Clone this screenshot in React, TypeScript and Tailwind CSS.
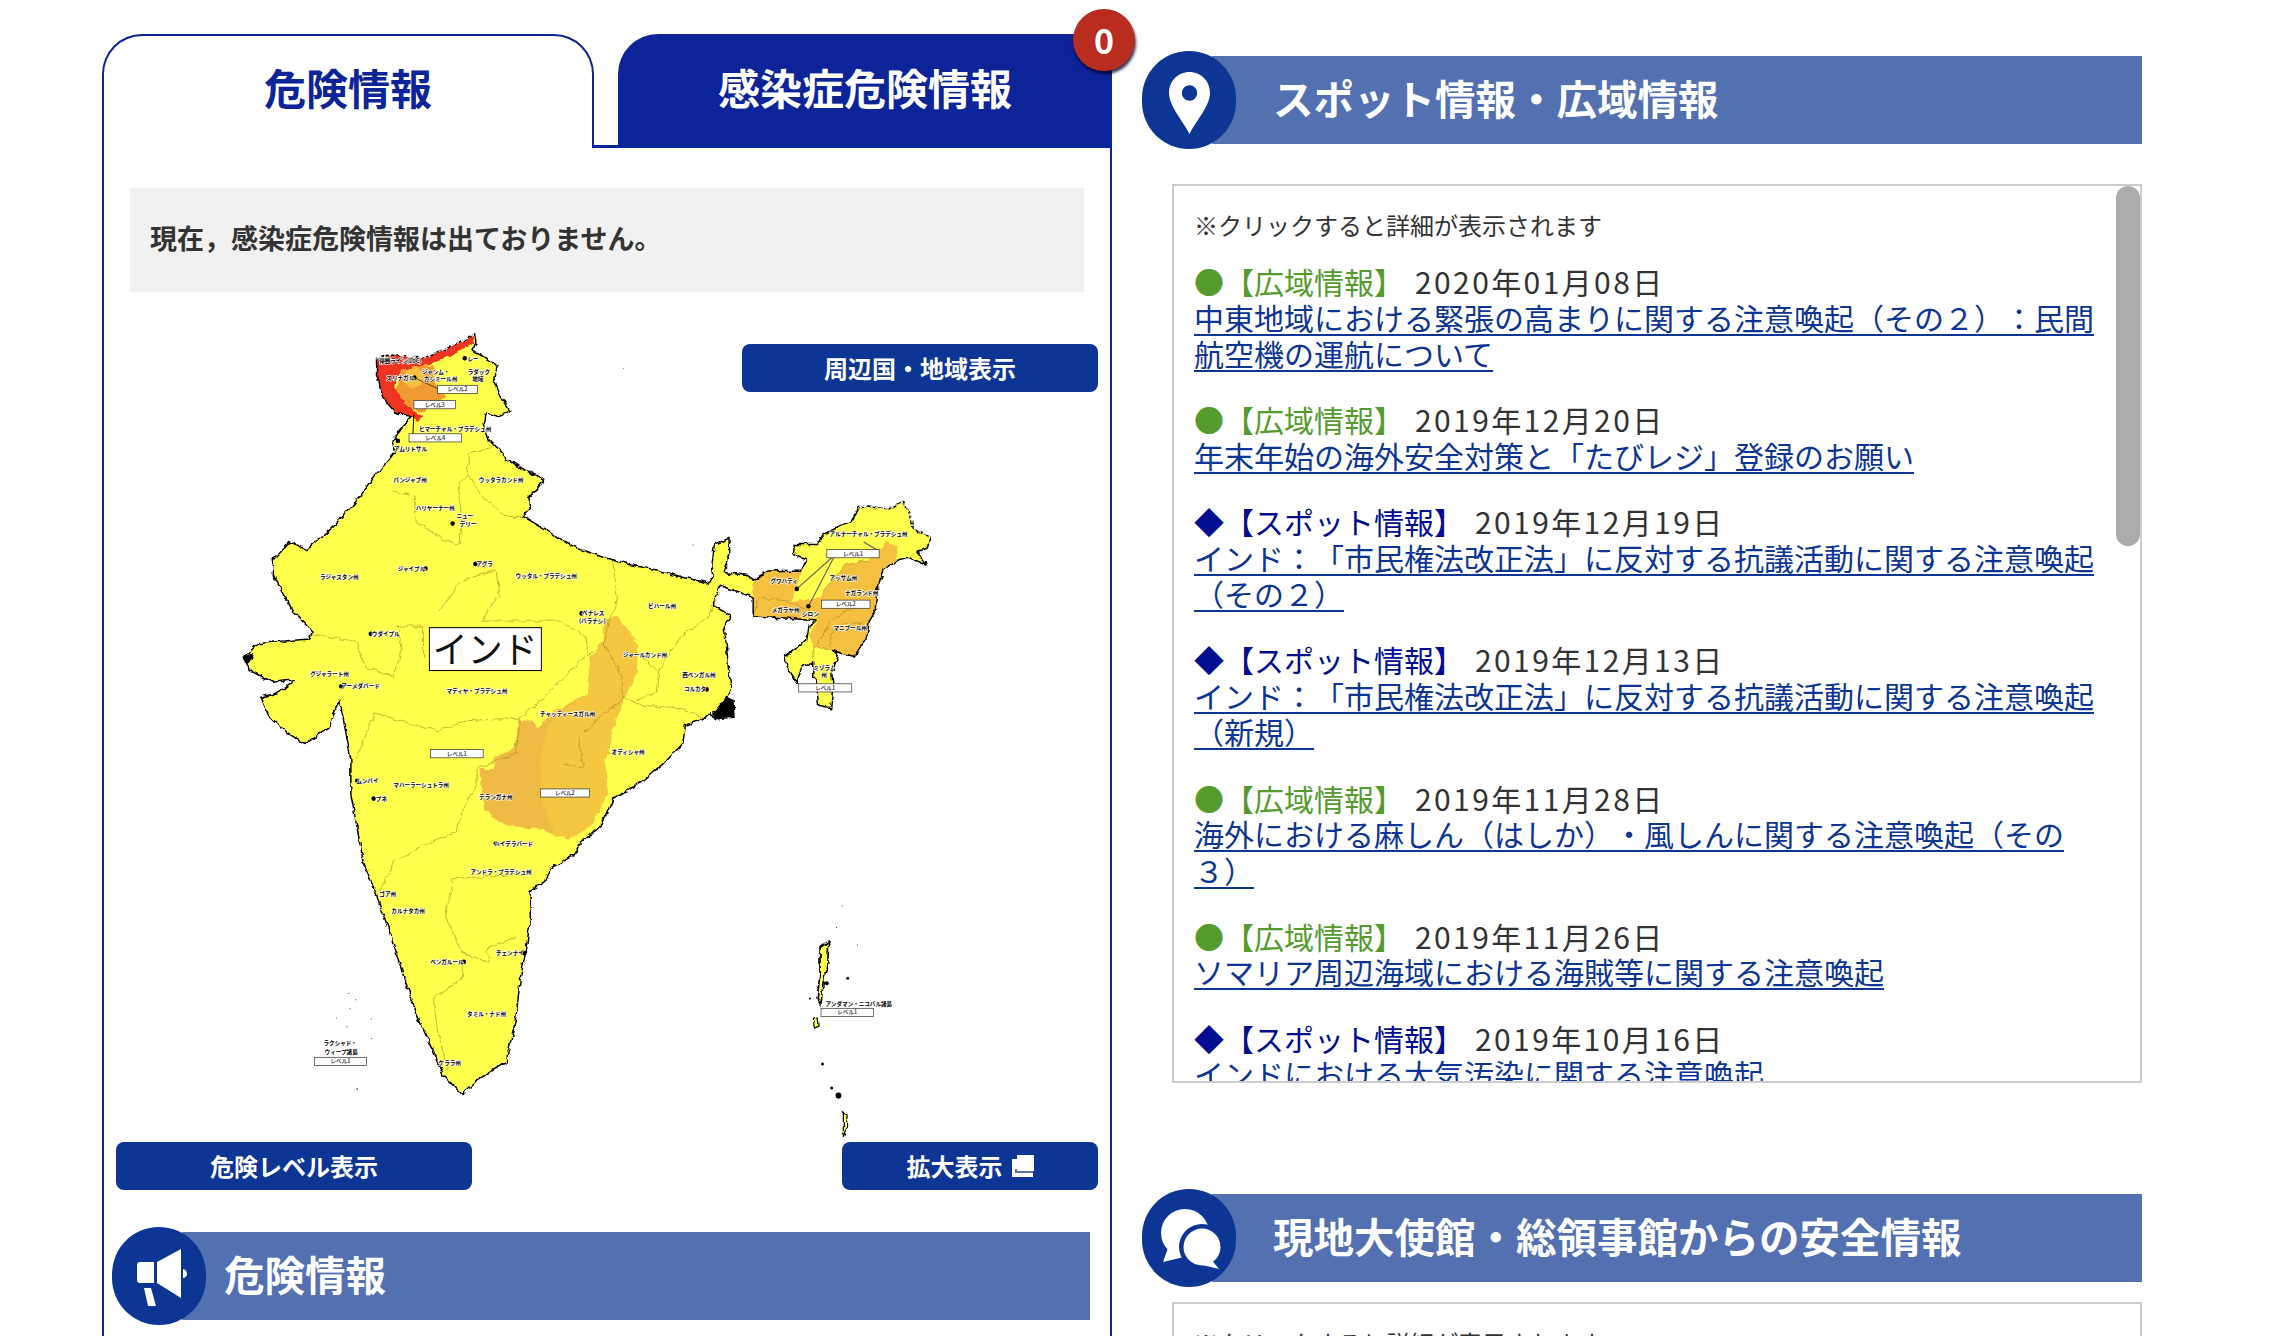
import { ReactNode } from "react";

const JP = "font-['Noto_Sans_CJK_JP','Noto_Sans',sans-serif]";

const outline =
  "M325,75 L350,68 L385,72 L420,75 L470,55 L505,40 L525,25 L528,45 L520,60 L540,70 L572,90 L565,115 L580,150 L598,178 L575,190 L550,182 L545,205 L555,235 L590,270 L620,290 L668,312 L655,330 L635,350 L640,370 L625,385 L670,410 L710,435 L745,450 L790,465 L850,480 L900,490 L960,505 L1005,515 L1020,505 L1015,480 L1020,440 L1050,428 L1052,460 L1040,495 L1085,500 L1100,510 L1130,492 L1200,490 L1210,470 L1183,460 L1185,440 L1235,440 L1245,420 L1300,395 L1320,365 L1380,370 L1410,355 L1425,385 L1430,410 L1465,425 L1458,450 L1440,455 L1458,480 L1420,465 L1400,470 L1370,490 L1355,530 L1352,570 L1340,590 L1335,620 L1310,660 L1265,648 L1275,660 L1262,690 L1265,715 L1260,760 L1235,755 L1230,705 L1225,700 L1225,670 L1200,680 L1190,710 L1170,680 L1165,660 L1210,630 L1215,600 L1230,590 L1180,585 L1100,580 L1100,545 L1090,540 L1060,530 L1030,520 L1020,540 L1018,560 L1055,580 L1040,600 L1045,640 L1050,690 L1055,720 L1045,740 L1060,770 L1020,785 L1010,770 L1000,780 L960,795 L955,830 L920,865 L870,905 L810,940 L790,985 L740,1030 L730,1050 L680,1075 L670,1100 L640,1120 L640,1180 L630,1240 L620,1290 L610,1370 L590,1455 L530,1490 L500,1518 L460,1480 L440,1430 L410,1370 L380,1290 L350,1200 L320,1120 L295,1060 L280,980 L270,930 L270,860 L250,760 L245,745 L225,800 L175,830 L140,810 L100,775 L85,740 L120,730 L155,705 L110,710 L60,685 L50,660 L75,635 L120,630 L185,625 L190,610 L150,570 L110,500 L110,470 L145,435 L180,450 L240,400 L290,345 L320,305 L360,260 L355,235 L375,210 L395,190 L360,180 L335,150 L325,110 Z";

const borders = [
  "M355,335 L400,345 L405,395 L460,430 L495,440 L500,390 L490,330 L510,300 L515,260 L560,250",
  "M510,300 L540,345 L590,385 L625,385",
  "M450,570 L500,510 L570,490 L575,540 L540,590 L640,590 L700,590 L755,620 L760,660 L790,630 L820,545 L810,470",
  "M190,615 L280,630 L300,680 L360,700 L375,640 L365,600 L420,600 L420,660",
  "M320,770 L350,780 L450,805 L510,785 L620,780 L670,740 L720,690 L750,660",
  "M280,860 L320,770",
  "M620,780 L610,850 L530,880 L530,910 L500,960 L490,1000 L420,1030 L360,1060 L330,1120",
  "M790,630 L830,700 L830,740 L870,755 L950,760 L1000,780",
  "M710,870 L750,880 L740,820 L780,780 L835,740",
  "M905,690 L950,620 L1010,580 L1030,530",
  "M860,650 L905,690 L900,730 L860,745",
  "M480,1095 L640,1085 M480,1095 L465,1170 L500,1240 L555,1260 L550,1230 L610,1210",
  "M440,1330 L500,1290 L500,1260",
  "M470,1470 L450,1400 L440,1330",
  "M1110,545 L1170,550 L1220,570 M1100,580 L1110,545",
  "M1230,640 L1260,590 L1290,570 L1335,560 M1255,640 L1270,600 L1340,590",
  "M1245,530 L1290,480 L1340,470 M1225,640 L1225,670 M1265,648 L1225,640",
];

const labels: [number, number, string][] = [
  [372, 80, "停戦ライン(LoC)"],
  [372, 114, "スリナガル"],
  [445, 101, "ジャンム・"],
  [455, 116, "カシミール州"],
  [534, 101, "ラダック"],
  [532, 116, "地域"],
  [522, 76, "レー"],
  [485, 213, "ヒマーチャル・プラデシュ州"],
  [393, 253, "アムリトサル"],
  [392, 314, "パンジャブ州"],
  [580, 314, "ウッタラカンド州"],
  [444, 368, "ハリヤーナー州"],
  [505, 384, "ニュー"],
  [512, 399, "デリー"],
  [395, 487, "ジャイプル"],
  [246, 504, "ラジャスタン州"],
  [546, 478, "アグラ"],
  [673, 502, "ウッタル・プラデシュ州"],
  [912, 560, "ビハール州"],
  [770, 575, "ベナレス"],
  [768, 590, "(バラナシ)"],
  [342, 615, "ウダイプル"],
  [877, 657, "ジャールカンド州"],
  [988, 696, "西ベンガル州"],
  [226, 694, "グジャラート州"],
  [290, 718, "アーメダバード"],
  [530, 727, "マディヤ・プラデシュ州"],
  [980, 724, "コルカタ"],
  [717, 772, "チャッティースガル州"],
  [842, 846, "オディシャ州"],
  [304, 903, "ムンバイ"],
  [415, 912, "マハーラーシュトラ州"],
  [333, 938, "プネ"],
  [569, 934, "テランガナ州"],
  [606, 1026, "ハイデラバード"],
  [580, 1082, "アンドラ・プラデシュ州"],
  [346, 1124, "ゴア州"],
  [388, 1158, "カルナタカ州"],
  [598, 1241, "チェンナイ"],
  [468, 1258, "ベンガルール"],
  [550, 1360, "タミル・ナド州"],
  [474, 1456, "ケララ州"],
  [248, 1416, "ラクシャド・"],
  [250, 1435, "ウィープ諸島"],
  [1318, 1340, "アンダマン・ニコバル諸島"],
  [1338, 420, "アルナーチャル・プラデシュ州"],
  [1164, 511, "グワハティ"],
  [1286, 505, "アッサム州"],
  [1324, 534, "ナガランド州"],
  [1167, 569, "メガラヤ州"],
  [1218, 576, "シロン"],
  [1300, 603, "マニプール州"],
  [1247, 681, "ミゾラム"],
  [1246, 696, "州"],
];

const levels: [number, number, number, string][] = [
  [449, 128, 82, "レベル2"],
  [400, 158, 86, "レベル3"],
  [390, 223, 108, "レベル4"],
  [434, 842, 109, "レベル1"],
  [661, 919, 101, "レベル2"],
  [1252, 450, 108, "レベル1"],
  [1241, 549, 100, "レベル2"],
  [1194, 713, 109, "レベル1"],
  [1240, 1349, 108, "レベル1"],
  [195, 1445, 107, "レベル1"],
];

const cities: [number, number][] = [
  [505, 75], [401, 113], [367, 237], [480, 399], [424, 487], [527, 478], [746, 575],
  [311, 615], [250, 718], [1004, 724], [283, 903], [317, 938], [569, 1026],
  [628, 1241], [503, 1258], [1190, 527], [1214, 561],
];

const IndiaMap = () => (
  <svg
    viewBox="0 0 1568 1611"
    width={760}
    height={822}
    preserveAspectRatio="none"
    className="block"
  >
    <defs>
      <filter id="rough" x="0" y="0" width="1568" height="1611" filterUnits="userSpaceOnUse">
        <feTurbulence type="fractalNoise" baseFrequency="0.07" numOctaves={2} seed={4} />
        <feDisplacementMap in="SourceGraphic" scale={11} xChannelSelector="R" yChannelSelector="G" />
      </filter>
    </defs>
    <g filter="url(#rough)">
      <path d={outline} fill="#ffff4d" />
      <path
        d="M790,590 L815,580 L845,610 L862,640 L860,690 L835,740 L810,800 L795,870 L800,930 L770,985 L720,1018 L670,1000 L590,990 L545,960 L535,880 L565,880 L570,855 L610,840 L615,785 L645,785 L655,800 L685,770 L760,730 L765,660 L790,630 Z"
        fill="#f0bb45"
      />
      <path
        d="M790,590 L815,580 L845,610 L862,640 L860,690 L835,740 L810,800 L795,870 L800,930 L770,985 L720,1018 L690,1005 L660,930 L660,860 L680,790 L760,730 L765,660 L790,630 Z"
        fill="#f5c63f"
      />
      <path
        d="M1100,510 L1130,492 L1200,490 L1190,520 L1180,550 L1240,545 L1245,530 L1290,480 L1340,470 L1375,435 L1400,445 L1395,470 L1370,490 L1355,530 L1352,570 L1340,590 L1335,620 L1310,660 L1265,648 L1225,640 L1215,620 L1235,585 L1180,585 L1100,580 Z"
        fill="#f5c040"
      />
      <path
        d="M325,75 L350,68 L385,72 L420,75 L470,55 L505,40 L525,25 L522,45 L470,72 L420,90 L375,98 L360,130 L390,172 L420,190 L405,200 L395,190 L360,180 L335,150 L325,110 Z"
        fill="#ee3524"
      />
      <path d="M375,98 L420,90 L440,88 L445,130 L465,150 L420,182 L390,172 L365,135 Z" fill="#f29a33" />
      <circle cx={400} cy={113} r={20} fill="#f5c040" />
      {borders.map((d, i) => (
        <path key={i} d={d} fill="none" stroke="#9a8420" strokeWidth={1.2} />
      ))}
      <path d={outline} fill="none" stroke="#000" strokeWidth={3} strokeLinejoin="round" />
      <path d="M325,75 L350,68 L385,72 L420,75 L470,55 L505,40 L525,25" fill="none" stroke="#fff" strokeWidth={2.4} strokeDasharray="6 6" />
      <path d="M1320,365 L1380,370 L1410,355 L1425,385 L1430,410 L1465,425" fill="none" stroke="#fff" strokeWidth={2.4} strokeDasharray="5 6" />
      {/* 海岸の黒い部分と島 */}
      <path d="M1015,772 L1045,738 L1060,745 L1062,780 L1020,783 Z" fill="#000" />
      <path d="M46,662 L65,652 L72,662 L55,675 Z" fill="#000" />
      <path d="M1238,1230 L1256,1218 L1254,1260 L1244,1300 L1240,1342 L1232,1330 L1238,1280 Z" fill="#ffff4d" stroke="#000" strokeWidth={3.5} />
      <path d="M1224,1368 L1234,1366 L1236,1384 L1226,1388 Z" fill="#ffff4d" stroke="#000" strokeWidth={2.5} />
      <path d="M1286,1552 L1294,1556 L1292,1590 L1286,1600 Z" fill="#ffff4d" stroke="#000" strokeWidth={2.5} />
    </g>
    {[
      [1252, 1300, 4], [1295, 1290, 3], [1217, 1330, 2], [1243, 1458, 3], [1262, 1505, 3], [1276, 1520, 6],
      [1284, 1148, 1], [1272, 1190, 1], [1315, 1225, 1], [266, 1320, 1], [280, 1332, 1], [268, 1350, 1],
      [240, 1368, 1], [312, 1370, 1], [262, 1385, 1], [312, 1408, 1], [283, 1507, 1.5], [976, 441, 1], [832, 95, 0.8],
    ].map(([cx, cy, r], i) => (
      <circle key={i} cx={cx} cy={cy} r={r} fill="#000" />
    ))}
    <path d="M400,185 L398,225" stroke="#000" strokeWidth={2} />
    <path d="M401,113 L450,135" stroke="#000" strokeWidth={1.2} />
    <path d="M1190,527 L1262,466 M1214,561 L1266,466 M1328,435 L1358,452" stroke="#666" strokeWidth={2.4} />
    {cities.map(([cx, cy], i) => (
      <circle key={i} cx={cx} cy={cy} r={4.6} fill="#000" />
    ))}
    {labels.map(([x, y, t], i) => (
      <text
        key={i}
        x={x}
        y={y + 4}
        textAnchor="middle"
        fontSize={11.5}
        fontWeight={700}
        fontFamily="'Noto Sans CJK JP', sans-serif"
        fill="#000"
        stroke="#fff"
        strokeWidth={2.5}
        paintOrder="stroke"
      >
        {t}
      </text>
    ))}
    {levels.map(([x, y, w, t], i) => (
      <g key={i}>
        <rect x={x} y={y} width={w} height={16} fill="#fff" stroke="#333" strokeWidth={1.4} />
        <text
          x={x + w / 2}
          y={y + 12}
          textAnchor="middle"
          fontSize={11.5}
          fontWeight={500}
          fontFamily="'Noto Sans CJK JP', sans-serif"
          fill="#222"
        >
          {t}
        </text>
      </g>
    ))}
    <rect x={432} y={603} width={231} height={84} fill="#fff" stroke="#000" strokeWidth={2} />
    <text
      x={547}
      y={673}
      textAnchor="middle"
      fontSize={72}
      fontFamily="'Noto Sans CJK JP', sans-serif"
      fill="#111"
    >
      インド
    </text>
  </svg>
);

const PinIcon = () => (
  <svg viewBox="0 0 41 62" className="mt-[5px] h-[62px] w-[41px]">
    <path
      fillRule="evenodd"
      d="M20.500 0C9 0 0 9 0 21c0 13 14 28 20.500 41C27 49 41 34 41 21 41 9 32 0 20.500 0Zm0 13.300a7.700 7.700 0 1 1 0 15.400 7.700 7.700 0 0 1 0-15.400Z"
      fill="#fff"
    />
  </svg>
);

const MegaphoneIcon = () => (
  <svg viewBox="7 7 94 98" className="h-[98px] w-[94px]">
    <path d="M35 42 H49 V63 H35 Q32 63 32 60 V45 Q32 42 35 42 Z" fill="#fff" />
    <path d="M52 42 L76 29 L76 78 L52 63 Z" fill="#fff" />
    <path d="M78 49 Q82 50 82 54 Q82 57 78 58 Z" fill="#fff" />
    <path d="M39 68 L46 68 L51 86 L43 86 Z" fill="#fff" />
  </svg>
);

const BubblesIcon = () => (
  <svg viewBox="12 9 94 98" className="h-[98px] w-[94px]">
    <circle cx={55} cy={53} r={24} fill="#fff" />
    <path d="M38 68 L33 82 L54 77 Z" fill="#fff" />
    <circle cx={72} cy={67} r={23} fill="#0d3593" />
    <circle cx={72} cy={67} r={18.500} fill="#fff" />
    <path d="M80 78 L89 89 L68 84 Z" fill="#fff" />
  </svg>
);

const CopyIcon = () => (
  <svg viewBox="0 0 22 22" className="h-[22px] w-[22px]">
    <path d="M0 4 H5 V16 H21 V22 H0 Z" fill="#fff" />
    <rect x={3} y={14} width={18} height={4} fill="#5b72b5" />
    <rect x={5} y={0} width={17} height={16} fill="#fff" />
  </svg>
);

interface SectionBannerProps {
  title: string;
  icon: ReactNode;
  className?: string;
  titleClassName?: string;
}

const SectionBanner = ({ title, icon, className, titleClassName }: SectionBannerProps) => (
  <div className={`flex items-center h-[98px] ${className ?? ""}`}>
    <div className="relative z-10 flex h-[98px] w-[94px] shrink-0 items-center justify-center rounded-full bg-[#0d3593]">
      {icon}
    </div>
    <div
      className={`-ml-[24px] flex h-[88px] flex-1 items-center bg-[#5370b0] pb-[3px] text-[40.5px] leading-none font-bold text-white ${titleClassName ?? ""}`}
    >
      {title}
    </div>
  </div>
);

interface ActionButtonProps {
  children: ReactNode;
  className?: string;
}

const ActionButton = ({ children, className }: ActionButtonProps) => (
  <button
    className={`flex h-[48px] items-center justify-center rounded-lg bg-[#0d3593] text-[24px] leading-none font-bold text-white ${className ?? ""}`}
  >
    {children}
  </button>
);

interface Notice {
  kind: "wide" | "spot";
  date: string;
  text: string;
}

const notices: Notice[] = [
  { kind: "wide", date: "2020年01月08日", text: "中東地域における緊張の高まりに関する注意喚起（その２）：民間航空機の運航について" },
  { kind: "wide", date: "2019年12月20日", text: "年末年始の海外安全対策と「たびレジ」登録のお願い" },
  { kind: "spot", date: "2019年12月19日", text: "インド：「市民権法改正法」に反対する抗議活動に関する注意喚起（その２）" },
  { kind: "spot", date: "2019年12月13日", text: "インド：「市民権法改正法」に反対する抗議活動に関する注意喚起（新規）" },
  { kind: "wide", date: "2019年11月28日", text: "海外における麻しん（はしか）・風しんに関する注意喚起（その３）" },
  { kind: "wide", date: "2019年11月26日", text: "ソマリア周辺海域における海賊等に関する注意喚起" },
  { kind: "spot", date: "2019年10月16日", text: "インドにおける大気汚染に関する注意喚起" },
];

const NoticeItem = ({ notice }: { notice: Notice }) => (
  <li className="mb-[29.75px] text-[30px] leading-[36.5px]">
    <div className="-mb-[1px]">
      {notice.kind === "wide" ? (
        <span className="text-[#559b2e]">●【広域情報】</span>
      ) : (
        <span className="text-[#000e8f]">◆【スポット情報】</span>
      )}
      <span className="ml-[11px] tracking-[2.4px] text-[#333]">{notice.date}</span>
    </div>
    <a className="text-[#0d3593] underline underline-offset-[4px] decoration-2">{notice.text}</a>
  </li>
);

const App = () => {
  return (
    <div className={`relative flex h-[1336px] w-[2284px] items-start overflow-hidden bg-white [text-spacing-trim:space-all] ${JP}`}>
      {/* 左カラム */}
      <div className="ml-[102px] mt-[34px] w-[1010px] shrink-0">
        <div className="flex h-[114px]">
          <div className="flex w-[492px] justify-center rounded-t-[40px] border-2 border-b-0 border-[#0d2398] pt-[26px] text-[42px] leading-[50px] font-bold text-[#0d2398]">
            危険情報
          </div>
          <div className="w-[24px] self-end border-b-[3px] border-[#0d2398]" />
          <div className="relative flex flex-1 justify-center rounded-tl-[40px] bg-[#0d2398] pt-[28px] text-[42px] leading-[50px] font-bold text-white">
            感染症危険情報
            <div className="absolute -top-[25px] -right-[23px] flex h-[62px] w-[62px] items-center justify-center rounded-full bg-[#b92c20] text-[34px] leading-none font-bold text-white shadow-[1px_3px_3px_rgba(0,0,40,0.8)]">
              0
            </div>
          </div>
        </div>
        <div className="h-[1190px] border-x-2 border-[#0d2398] pt-[40px]">
          <div className="ml-[26px] flex h-[104px] w-[954px] items-center bg-[#f1f1f1] pb-[4px] pl-[20px] text-[27px] font-bold text-[#333]">
            現在，感染症危険情報は出ておりません。
          </div>
          <div className="relative mt-[28px] pl-[116px]">
            <IndiaMap />
            <ActionButton className="absolute right-[12px] top-[24px] w-[356px]">周辺国・地域表示</ActionButton>
          </div>
          <div className="flex justify-between px-[12px]">
            <ActionButton className="w-[356px]">危険レベル表示</ActionButton>
            <ActionButton className="w-[256px] gap-[9px]">
              拡大表示
              <CopyIcon />
            </ActionButton>
          </div>
          <SectionBanner
            title="危険情報"
            icon={<MegaphoneIcon />}
            className="ml-[8px] mr-[20px] mt-[37px]"
            titleClassName="pl-[42px]"
          />
        </div>
      </div>

      {/* 右カラム */}
      <div className="ml-[30px] mt-[51px] w-[1000px] shrink-0">
        <SectionBanner title="スポット情報・広域情報" icon={<PinIcon />} titleClassName="pl-[61px]" />
        <div className="relative ml-[30px] mt-[35px] h-[899px] overflow-hidden border-2 border-[#ccc] pl-[20px] pr-[30px] pt-[21px]">
          <p className="mb-[20px] text-[24px] leading-[36px] text-[#333]">※クリックすると詳細が表示されます</p>
          <ul>
            {notices.map((n) => (
              <NoticeItem key={n.date} notice={n} />
            ))}
          </ul>
          <div className="absolute right-0 top-0 h-[360px] w-[24px] rounded-full bg-[#acacac]" />
        </div>
        <SectionBanner
          title="現地大使館・総領事館からの安全情報"
          icon={<BubblesIcon />}
          className="mt-[106px]"
          titleClassName="pl-[61px]"
        />
        <div className="ml-[30px] mt-[15px] h-[200px] border-2 border-[#ccc] pl-[20px] pt-[21px]">
          <p className="text-[24px] leading-[36px] text-[#333]">※クリックすると詳細が表示されます</p>
        </div>
      </div>
    </div>
  );
};

export default App;
